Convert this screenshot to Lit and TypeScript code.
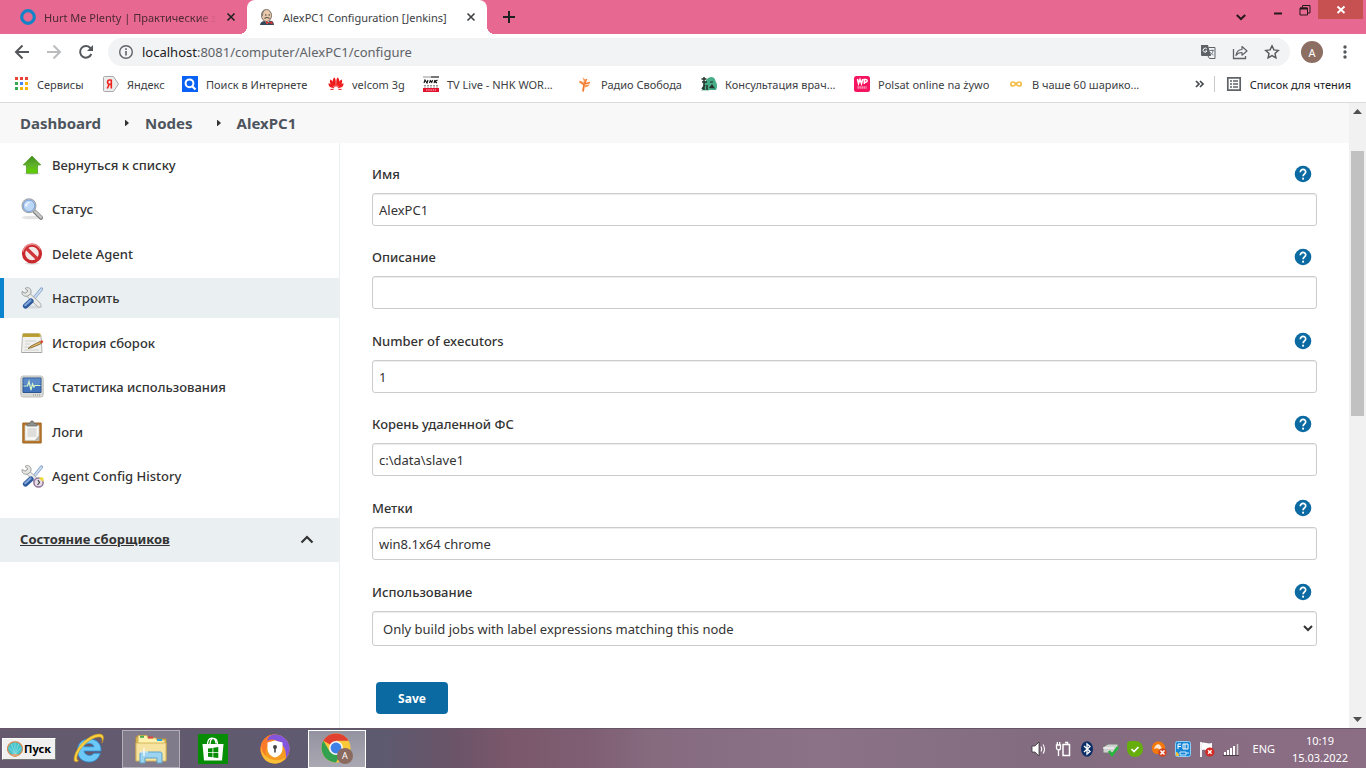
import { LitElement, html, css, svg, type TemplateResult } from "lit";
import { customElement } from "lit/decorators.js";
import { classMap } from "lit/directives/class-map.js";

const icon = (size: number, body: TemplateResult, box = size) =>
  html`<svg width=${size} height=${size} viewBox="0 0 ${box} ${box}" fill="none" aria-hidden="true">${body}</svg>`;

/* ---------- browser icons ---------- */

const ring = icon(16, svg`<circle cx="8" cy="8" r="6.3" stroke="#1583c6" stroke-width="3.2"/>`);

const butler = icon(16, svg`
  <path d="M1 16c.3-2.500 1.500-3.400 4-4l7-.3c2 .5 2.800 2 3 4.300z" fill="#33495c"/>
  <path d="M5.500 11.500 8 15l3-3.500z" fill="#fff"/>
  <ellipse cx="7.500" cy="6.500" rx="5" ry="6" fill="#e8c9ac" stroke="#5b5148" stroke-width=".8"/>
  <path d="M2.600 7C1.800 3 4 .8 7 .6c-2 1.200-2.800 2.500-3 6.400z" fill="#8b8178"/>
  <path d="M5.500 9.500c1.500-1.200 3.500-1.200 5 0" stroke="#5b5148" stroke-width="1.200"/>
  <path d="M6 6h1.500M9.500 6H11" stroke="#3d3530"/>
  <path d="m7 12 3 1.400L13.500 12v3.500L10 14l-3 1z" fill="#d33833"/>`);

const closeX = icon(10, svg`<path d="m1.500 1.500 7 7m0-7-7 7" stroke="currentColor" stroke-width="1.600"/>`);
const plus = icon(12, svg`<path d="M6 0v12M0 6h12" stroke="#202124" stroke-width="2"/>`);
const tabMenu = icon(10, svg`<path d="m.8 3 4.200 4 4.200-4" stroke="#26191e" stroke-width="2"/>`);
const minimise = icon(10, svg`<path d="M1 8.500h8" stroke="#26191e" stroke-width="2"/>`);
const restore = icon(12, svg`<path d="M1 4h7.500v7H1z" stroke="#26191e"/><path d="M1 4.500h7.500" stroke="#26191e" stroke-width="2"/><path d="M3.500 3.500v-2h7.500v7.500h-2" stroke="#26191e"/>`);
const closeWin = icon(10, svg`<path d="m1.500 1.500 7 6.500m0-6.500-7 6.500" stroke="#fff" stroke-width="2"/>`);

const back = icon(16, svg`<path d="M15 8H2m6.500-6.500L2 8l6.500 6.500" stroke="#54575b" stroke-width="2"/>`);
const forward = icon(16, svg`<path d="M1 8h13M7.500 1.500 14 8l-6.500 6.500" stroke="#babcbe" stroke-width="2"/>`);
const reload = icon(16, svg`<path d="M13.300 10a5.800 5.800 0 1 1-1.200-6.200L14 5.500" stroke="#54575b" stroke-width="2"/><path d="M15 1v6H9z" fill="#54575b"/>`);
const info = icon(16, svg`<circle cx="8" cy="8" r="6.300" stroke="#5f6368" stroke-width="1.400"/><path d="M8 7v4.500M8 4.300v1.600" stroke="#5f6368" stroke-width="1.600"/>`);
const translate = icon(16, svg`
  <path d="M1 1h7l3 11H2a1 1 0 0 1-1-1z" fill="#5f6368"/>
  <path d="M8.500 3.500H15v11H9.500L8 12" stroke="#5f6368"/>
  <path d="M6.800 5A2 2 0 1 0 7 7H5.200" stroke="#fff"/>
  <path d="M9.500 6.500H14M12 5.500v1M13 7c-.5 2-1.500 3.500-3 4m0-3c.8 1.500 2 2.500 3.500 3" stroke="#5f6368" stroke-width=".8"/>`);
const share = icon(16, svg`<path d="M1.500 5v9.500h12V12" stroke="#5f6368" stroke-width="1.300"/><path d="M4 11.500c.5-4 2.500-5.800 6-6V2.500L15 7l-5 4.200V8.500c-3-.1-4.500.8-6 3z" stroke="#5f6368" stroke-width="1.200" stroke-linejoin="round"/>`);
const star = icon(16, svg`<path d="m8 1.800 1.900 4.100 4.400.5-3.300 3 .9 4.400L8 11.600l-3.900 2.200.9-4.400-3.300-3 4.400-.5z" stroke="#54575b" stroke-width="1.400"/>`);
const kebab = icon(16, svg`<g fill="#54575b"><circle cx="8" cy="3" r="1.700"/><circle cx="8" cy="8" r="1.700"/><circle cx="8" cy="13" r="1.700"/></g>`);

const apps = icon(16, svg`
  <path d="M2 1h3v3H2zM7 1h3v3H7zM12 1h3v3h-3z" fill="#ea4335"/>
  <path d="M2 6h3v3H2zM2 11h3v3H2z" fill="#34a853"/><path d="M7 6h3v3H7z" fill="#4285f4"/>
  <path d="M12 6h3v3h-3zM7 11h3v3H7zM12 11h3v3h-3z" fill="#fbb40a"/>`);
const yandex = icon(16, svg`<path d="M1.500.5h9l5 7.500-5 7.500h-9a1 1 0 0 1-1-1v-13a1 1 0 0 1 1-1z" fill="#ececec" stroke="#a9a9a9"/><path d="M8.300 3.500v9M8 4H6.400C4 4 4 8.200 6.400 8.200H8M6.300 8.200l-2 4.300" stroke="#f0201b" stroke-width="1.600"/>`);
const search = icon(16, svg`<path d="M0 0h16v16H0z" fill="#0a62f5"/><circle cx="7.500" cy="7.300" r="3.900" stroke="#fff" stroke-width="2"/><path d="m10 10 3.500 3.500" stroke="#fff" stroke-width="2.200"/>`);
const flower = icon(16, svg`<g fill="#ee1c1c">
  <path d="M7.700 11C4.200 8 3.800 4 6.200 1.500c1.500.6 1.800 3.500 1.500 9.500z"/><path d="M8.300 11C11.800 8 12.200 4 9.800 1.500c-1.500.6-1.800 3.500-1.500 9.500z"/>
  <path d="M6.900 11.300C3 9.500 1 7 2.300 3.600 4.600 4.400 6 7 6.900 11.300z"/><path d="M9.100 11.300C13 9.500 15 7 13.700 3.600c-2.300.8-3.700 3.400-4.600 7.700z"/>
  <path d="M6.500 12C2.500 12 .5 10.500.3 7.500c2.600-.4 4.400 1.500 6.200 4.500z"/><path d="M9.500 12c4 0 6-1.500 6.200-4.500-2.600-.4-4.400 1.500-6.200 4.500z"/>
  <path d="M6.500 12.800c-1.800 1.600-3.500 1.700-4.700.2zM9.500 12.800c1.800 1.600 3.500 1.700 4.700.2z"/></g>`);
const nhk = icon(16, svg`
  <path d="M0 0h8v2H0z" fill="#c9c9c9"/><path d="M8 0h8v2H8z" fill="#777"/>
  <path d="M1 7l1-3 2 3 1-3M6.500 7l1-3m2 0-1 3M7 5.500h2M11 7l1-3m2.500 0L12 5.500 14 7" stroke="#111" stroke-width="1.100"/>
  <path d="M1 9.500h14M1 11h14" stroke="#999" stroke-dasharray="2 1"/>
  <path d="M0 12h16v4H0z" fill="#e0122d"/><path d="M3 14h10" stroke="#fbc" stroke-dasharray="1.500 .7"/>`);
const torch = icon(16, svg`<path d="m6 15.500 1.200-7.500M7 8.500 2.500 5.500M7.500 8 13 6.500M7.500 7.500 9.500 3" stroke="#f4792b" stroke-width="1.800"/><path d="M7 6 5.500 1 9 4.500zM1.500 4.500l5 1.500 1.500 3zM8 9l5-.5-2 2-3 1z" fill="#f79a5a"/>`);
const doctor = icon(16, svg`<path d="M6 3c3-3.500 8-2.500 8.500 2 2 3.500 2 6 .5 9H1l2-7z" fill="#47ae87"/><path d="M3 1v13M.5 3h5M1 6h5M4 9l-3 4M6 9v5" stroke="#26352f" stroke-width="1.500"/><path d="m8 12 3-4 3 4.500z" fill="#27302d"/><path d="M9 6h3" stroke="#222"/><path d="M0 14.500h8" stroke="#b9dccf"/>`);
const wp = icon(16, svg`<rect width="16" height="16" rx="2.500" fill="#f5145f"/><path d="m3.500 3 1 4.500 1.500-4 1.500 4 1.300-4.500M10.300 8V3.500h1.400c2 0 2 2.700 0 2.700h-1.400" stroke="#fff" stroke-width="1.500"/><path d="M3.500 11.500h9" stroke="#fba3c2" stroke-width="2.500" stroke-dasharray="1.300 .7"/>`);
const infinity = icon(16, svg`<path d="M8 8C6.500 6 5.500 6 4.800 6a2 2 0 0 0 0 4C5.500 10 6.500 10 8 8s2.500-2 3.200-2a2 2 0 0 1 0 4C10.500 10 9.500 10 8 8z" stroke="#f4bd45" stroke-width="1.700"/>`);
const overflow = icon(10, svg`<path d="m1 2 3 3-3 3m4-6 3 3-3 3" stroke="#46494d" stroke-width="1.700"/>`);
const readList = icon(16, svg`<path d="M1.800 1.800h12.400v12.400H1.800z" stroke="#5f6368" stroke-width="1.700"/><path d="M4 5h2m1 0h5M4 8h2m1 0h5M4 11h2m1 0h5" stroke="#5f6368" stroke-width="1.500"/>`);

/* ---------- sidebar icons ---------- */

const upArrow = icon(24, svg`<ellipse cx="12" cy="20.500" rx="8" ry="1.500" fill="#ddd"/><path d="m12 3 8.800 9h-3.300v8.200H6.500V12H3.200z" fill="url(#g-up)" stroke="#479a18" stroke-width=".7"/>
  <defs><linearGradient id="g-up" x1="0" y1="0" x2="0" y2="1"><stop stop-color="#3e8f1c"/><stop offset=".5" stop-color="#5fae2b"/><stop offset="1" stop-color="#62d400"/></linearGradient></defs>`);
const magnifier = icon(24, svg`<ellipse cx="11" cy="20.500" rx="9" ry="1.700" fill="#e3e3e3"/><path d="m14.500 14.500 6.500 6.200" stroke="#77797a" stroke-width="4.200" stroke-linecap="round"/><path d="m15 14.500 6 5.800" stroke="#c5c6c6" stroke-width="2.500" stroke-linecap="round"/>
  <circle cx="9" cy="8.800" r="6.900" fill="#bdd8f7" stroke="#a3a5a8" stroke-width="1.200"/><circle cx="9" cy="8.800" r="5.700" stroke="#7ba3de"/><path d="M4.800 9c.5-3 3-4.500 6-4-2 .8-3.500 2.500-4 5z" fill="#eaf3ff"/>`);
const forbid = icon(24, svg`<ellipse cx="12" cy="21.500" rx="7" ry="1.200" fill="#ddd"/><circle cx="12" cy="11.500" r="8.400" fill="#f4e9e9" stroke="#c9282c" stroke-width="3.300"/><path d="m6 6 12 11.500" stroke="#d23539" stroke-width="3.300"/><path d="M3 9.500A9.300 9.300 0 0 1 20.500 7.500" stroke="#ea8d8f" stroke-width="1.500"/>`);
const toolShapes = svg`
  <path d="m21.500 3-7.300 9" stroke="#7f9fc9" stroke-width="3.200" stroke-linecap="round"/><path d="m21.300 3.200-7 8.800" stroke="#cfdef0" stroke-width="1.800" stroke-linecap="round"/>
  <path d="M7.500 8 19 19" stroke="#a4a6a7" stroke-width="4.800" stroke-linecap="round"/><path d="M7.500 8 19 19" stroke="#ecedeb" stroke-width="3.400" stroke-linecap="round"/>
  <path d="M5 2.500C8.500 0 12 3 10.800 7.500L8 10c-3.500 1-6.500-.8-6-4.500l3.300 1.700L8 5z" fill="#e6e7e5" stroke="#9a9c9b"/>
  <path d="m11 15-5.500 5" stroke="#2d5a9c" stroke-width="5.200" stroke-linecap="round"/><path d="m10.500 14.500-5.300 4.700" stroke="#7fa6da" stroke-width="2.200" stroke-linecap="round"/>`;
const tools = icon(24, svg`<ellipse cx="13" cy="21" rx="10" ry="1.600" fill="#d5dadd"/>${toolShapes}`);
const toolsHistory = icon(24, svg`${toolShapes}<circle cx="18.500" cy="18.500" r="4.600" fill="#e7dcea" stroke="#8f7596" stroke-width="1.500"/><path d="m18 16 1.500 2.500L17.500 21" stroke="#444" stroke-width="1.200"/><path d="M19 14.500c1-1.500 3-1.500 4.500-.5v4z" fill="#ecd93b"/>`);
const notepad = icon(24, svg`<path d="M2.500 4.500h18.500l1 17h-20.500z" fill="#f1f1ee" stroke="#b3b5b0"/><path d="M2.500 2.500h18v3.500h-18z" fill="#c9ab31"/><path d="M4 2v3.500m2-3.500v3.500m2-3.500v3.500m2-3.500v3.500m2-3.500v3.500m2-3.500v3.500m2-3.500v3.500m2-3.500v3.500" stroke="#93803a" stroke-width=".7"/><path d="M5 10h11M5 13h5M4.500 16h4M4 19h15" stroke="#d0d1cd"/><path d="M2 21.500h20" stroke="#a5a7a2"/><path d="m8 17.500 3-2.500 9-4.500 1.500 2-9.500 4z" fill="#e5bb64" stroke="#75592b" stroke-width=".8"/><path d="m20 10.300 2-1.300 1.500 2-2 1.500z" fill="#dc4b36"/>`);
const monitor = icon(24, svg`<rect x=".8" y="1" width="22.400" height="21" rx="2.500" fill="#d9dad6" stroke="#bcbeb9"/><path d="M3 3h18v14.500H3z" fill="#3f74bd" stroke="#2f5590"/><path d="M3.500 3.500h17V9c-6 2-11 2-17 0z" fill="#5d8bca"/><path d="M3.500 11h4l1.500-4.500L11 15l1.500-6 1.500 3 1-1.500h5.500" stroke="#d8f5c5" stroke-width="1.200"/><path d="M13 20h7" stroke="#8d908a" stroke-dasharray="1 1"/>`);
const clipboard = icon(24, svg`<path d="M2.800 3h18.400v20H2.800z" fill="#b9772c" stroke="#a06722"/><path d="M5 5.500h14V20.500H5z" fill="#f6f6f4" stroke="#c7c7c2" stroke-width=".7"/><path d="M7.500 8h9v9h-9z" fill="#dededb"/><path d="m19 15.500-4.500 5 4.500-.5z" fill="#b6b6b2"/><path d="M7 6V3.500h3L11 1h2l1 2.500h3V6z" fill="#8d8f8c" stroke="#6d6f6c" stroke-width=".8"/>`);
const chevronUp = icon(14, svg`<path d="m1.500 10.500 5.500-5.500 5.500 5.500" stroke="#333" stroke-width="2.200"/>`);
const crumbArrow = icon(6, svg`<path d="M1-.5v7l4-3.500z" fill="#333"/>`);
const help = html`<svg width="18" height="18" viewBox="0 0 18 18" fill="none" aria-hidden="true"><circle cx="9" cy="9" r="8.300" fill="#0b6aa2"/><path d="M6.300 7.200C6.300 3.300 11.900 3.600 11.700 7c-.1 1.800-2.600 2-2.600 4.200" stroke="#fff" stroke-width="1.700"/><path d="M9.100 12.700v1.900" stroke="#fff" stroke-width="1.900"/></svg>`;
const scrollUp = icon(9, svg`<path d="M0 7h9L4.500 2z" fill="#505050"/>`);
const scrollDown = icon(9, svg`<path d="M0 2h9L4.500 7z" fill="#505050"/>`);

/* ---------- taskbar icons ---------- */

const shell = icon(16, svg`<path d="M8 15.500C3 14 0 11 .5 6.500 2 2 5 .8 8 .8s6 1.200 7.500 5.700c.5 4.500-2.500 7.500-7.500 9z" fill="#45c3cc" stroke="#d98a54" stroke-width="1.200"/><path d="M8 14V2M8 14 4.500 3M8 14l3.500-11M8 14 2 6.500M8 14l6-7.500" stroke="#8fe0e2" stroke-width=".8"/><path d="M5 13h6l-1 2.500H6z" fill="#dba87e"/>`);
const explorerE = icon(32, svg`<path d="M28 18H11c.7 5 8 5.800 9.700 2.300h6.600C25.500 26 21.500 29 16 29 9 29 4.500 24 4.500 17.500 4.500 10.500 9.500 6 16 6c8 0 12.500 5 12 12zM11 13.800h10c-.5-4.500-9.200-4.500-10 0z" fill="#6cc8f6" stroke="#2b8fd6" stroke-width=".8"/><path d="M5.500 28C0 31 0 25 3.500 18 8.500 8.500 19 1 26.500 1c4.800.2 4.800 4.500 2.500 9 .9-4.500-.5-6.300-3.500-6C18.500 4.500 8.500 12.500 5 20.500c-1.600 3.700-1.500 6.200.5 7.500z" fill="#fad040" stroke="#c8931e" stroke-width=".6"/>`);
const folder = html`<svg width="34" height="30" viewBox="0 0 34 30" fill="none" aria-hidden="true"><path d="M2 3h9l1.500 2H32v21H2z" fill="#e4c265" stroke="#b99536"/><path d="M4 1.500h9L14 4h8l1 2h8v18H4z" fill="#fff1ae" stroke="#d0ad4d"/><path d="M14 3.500h5" stroke="#d44" stroke-width="2"/><path d="M23 6h5" stroke="#26a6e0" stroke-width="2"/><path d="M6 2.800h4" stroke="#4caa4f" stroke-width="2"/><path d="M2 9h30v18H2z" fill="#f7e3a0" stroke="#d6b65b"/><path d="M6 29V20c0-1 .5-2 2-2h18c1.500 0 2 1 2 2v9h-5v-5H11v5z" fill="#9cd3ef" stroke="#5ba5cd"/><path d="M10 14v8m-4-4h8" stroke="#fff" stroke-width="1.200"/></svg>`;
const store = html`<svg width="30" height="30" viewBox="0 0 30 30" fill="none" aria-hidden="true"><path d="M0 0h30v30H0z" fill="#078c05"/><path d="M4.500 10h21l-1.500 16.500H6z" fill="#fff"/><path d="M9.500 10c.5-7.500 8-8 8.500-.5M12 10c.5-7.500 7-7.500 7.500 0" stroke="#fff" stroke-width="1.300"/><path d="m10 14.500 4.500-.6v4.300H10zM15.300 13.800l5-.7v5.100h-5zM10 19h4.500v4.300l-4.500-.6zM15.300 19h5v5.100l-5-.7z" fill="#078c05"/></svg>`;
const guard = html`<svg width="30" height="30" viewBox="0 0 30 30" fill="none" aria-hidden="true"><circle cx="15" cy="15" r="14.500" fill="#f59b22"/><path d="M13 .5C6 1 .5 7 .5 15c0 5 3 10 7 12.500C4 20 5 10 13 6c4-2 9-1 12 1.500C22 3 18 .5 13 .5z" fill="#fb7b2a"/><path d="M14 .5c8-.5 14 5 15.500 12 .4 4-.5 8-3.500 12 .5-8-2-14-9-17.500C13 5 10 5 7 7c1-4 3.500-6.300 7-6.500z" fill="#8355dd"/><path d="M1 12c1 8 6 13 14 14 4 .5 8-.5 11-2.500-3 4.500-8 6.500-12.500 6C6 29 .5 23 1 12z" fill="#fabf36"/><path d="m15 6.500 7.500 2v5.500c0 5.500-3 8-7.500 9.500-4.500-1.500-7.500-4-7.500-9.500V8.500z" fill="#fff"/><circle cx="15" cy="13" r="2" fill="#444"/><path d="M15 14v4.500" stroke="#444" stroke-width="1.600"/></svg>`;
const chromeLogo = html`<svg width="32" height="32" viewBox="0 0 32 32" fill="none" aria-hidden="true"><circle cx="15" cy="15" r="14.500" fill="#f9c93a"/><path d="M15 15 2.400 7.700A14.500 14.500 0 0 1 27.600 7.700H15z" fill="#e24132"/><path d="M8.700 18.600 2.400 7.700C-2.500 16 2.500 29 15 29.500l6.300-10.900z" fill="#34a150"/><circle cx="15" cy="15" r="7" fill="#f6f6f6"/><circle cx="15" cy="15" r="5.400" fill="#3f7fe8"/></svg>`;

const speaker = icon(16, svg`<path d="M1 5h3l4-4v14l-4-4H1z" fill="#fff" stroke="#333" stroke-width=".8"/><path d="M10 5.500c1 1.500 1 3.500 0 5M12 3.500c2 2.500 2 6.500 0 9" stroke="#fff" stroke-width="1.100"/>`);
const battery = icon(16, svg`<path d="M8 3.500h6.500v11H8zM10 1.500h2.500v2" stroke="#fff" stroke-width="1.500"/><path d="M1.500 4h4v3a2 2 0 0 1-4 0zM2.300 4V1m2.400 3V1M3.500 9v6" stroke="#fff" stroke-width="1.300"/>`);
const bluetooth = icon(16, svg`<ellipse cx="8" cy="8" rx="6" ry="7.700" fill="#0b2e66"/><path d="m5 5 6 5.500L8 13V3l3 2.500L5 11" stroke="#fff" stroke-width="1.300"/>`);
const printer = icon(16, svg`<path d="m0 6 5-3h10v6l-4 3H0z" fill="#cfd1cf" stroke="#777"/><path d="M0 7h11" stroke="#fff"/><path d="m6 10 3 4 6-8" stroke="#25b53b" stroke-width="2.500"/>`);
const agent = icon(16, svg`<path d="M0 4C0 1 1 0 4 0h4c5 0 8 3.500 8 8s-3.500 8-8 8-8-3.500-8-8z" fill="#65ae0b"/><path d="m4.500 8 2.500 2.500 4.500-4.500" stroke="#fff" stroke-width="1.700"/>`);
const avastTray = icon(16, svg`<path d="M1 7C1 2 5 0 8 .5c4 .5 7 4 6 8-1 3.500-4 5-7 4.500-4 0-6-2-6-6z" fill="#f5780b"/><path d="M3 8c1-4 4-6 6-4l3 5c-1 2-3 1-4-1-1-1-3-1-5 0z" fill="#ffe8d2"/><circle cx="11.500" cy="11.500" r="4.200" fill="#d3441e"/><path d="m9.500 9.500 4 4m0-4-4 4" stroke="#fff" stroke-width="1.500"/>`);
const gpu = icon(16, svg`<rect x=".5" y=".5" width="15" height="15" rx="2" fill="#1685d6" stroke="#8bd0fa"/><path d="M3 3v5m0-5h3M3 5.500h3M8 3h5v5H8zM10 3v5" stroke="#fff"/><path d="M5 11h6v3H5zM11 12h3" stroke="#cdeaff"/><path d="M1 11c2 0 3 2 3 4H1z" fill="#f6c33c"/>`);
const flag = icon(16, svg`<path d="M2 1v15" stroke="#fff" stroke-width="1.800"/><path d="M3 2c3-1.500 5 1.500 10 0v7C8 10.500 6 8 3 9z" fill="#fff"/><circle cx="10.800" cy="11" r="4.600" fill="#d32a24"/><path d="m9 9.200 3.600 3.600m0-3.600L9 12.800" stroke="#fff" stroke-width="1.300"/>`);
const signal = icon(16, svg`<path d="M2 11v3M5 9v5M8 7v7M11 5v9" stroke="#fff" stroke-width="2"/><path d="M14.500 3v11" stroke="#ccc" stroke-width="1.500"/><path d="M0 14.500h16" stroke="#4b4048"/>`);

/* ---------- data ---------- */

interface Task { label: string; picture: TemplateResult; selected?: boolean }
interface Field { id: string; label: string; value: string }

const bookmarks: { label: string; picture: TemplateResult }[] = [
  { label: "Сервисы", picture: apps },
  { label: "Яндекс", picture: yandex },
  { label: "Поиск в Интернете", picture: search },
  { label: "velcom 3g", picture: flower },
  { label: "TV Live - NHK WOR...", picture: nhk },
  { label: "Радио Свобода", picture: torch },
  { label: "Консультация врач...", picture: doctor },
  { label: "Polsat online na żywo", picture: wp },
  { label: "В чаше 60 шарико...", picture: infinity },
];

const tasks: Task[] = [
  { label: "Вернуться к списку", picture: upArrow },
  { label: "Статус", picture: magnifier },
  { label: "Delete Agent", picture: forbid },
  { label: "Настроить", picture: tools, selected: true },
  { label: "История сборок", picture: notepad },
  { label: "Статистика использования", picture: monitor },
  { label: "Логи", picture: clipboard },
  { label: "Agent Config History", picture: toolsHistory },
];

const fields: Field[] = [
  { id: "name", label: "Имя", value: "AlexPC1" },
  { id: "description", label: "Описание", value: "" },
  { id: "executors", label: "Number of executors", value: "1" },
  { id: "root", label: "Корень удаленной ФС", value: "c:\\data\\slave1" },
  { id: "labels", label: "Метки", value: "win8.1x64 chrome" },
];

const base = css`
  * { box-sizing: border-box; }
  button, input, select { font: inherit; color: inherit; margin: 0; }
  button { border: 0; background: none; padding: 0; display: flex; align-items: center; justify-content: center; }
  a { color: inherit; text-decoration: none; }
  svg { display: block; flex: none; }
`;

@customElement("browser-chrome")
export class BrowserChrome extends LitElement {
  static styles = [base, css`
    :host { display: block; background: #fff; color: #3c4043; font-size: 11px; border-bottom: 1px solid #d9dbde; }
    .strip { display: flex; height: 34px; background: #e76891; }
    .tab { display: flex; align-items: center; gap: 8px; height: 34px; padding: 0 9px 0 20px; white-space: nowrap; }
    .tab.idle { width: 247px; color: #4d2936; }
    .tab.active { position: relative; width: 240px; padding-left: 12px; background: #fff; border-radius: 8px 8px 0 0; }
    .tab.active::before, .tab.active::after { content: ""; position: absolute; bottom: 0; width: 8px; height: 8px; }
    .tab.active::before { right: 100%; background: radial-gradient(circle at 0 0, transparent 8px, #fff 8px); }
    .tab.active::after { left: 100%; background: radial-gradient(circle at 100% 0, transparent 8px, #fff 8px); }
    .title { flex: 1; overflow: hidden; }
    .idle .title { -webkit-mask-image: linear-gradient(90deg, #000 90%, transparent); mask-image: linear-gradient(90deg, #000 90%, transparent); }
    .close { width: 14px; height: 16px; color: #202124; }
    .active .close { color: #3c4043; }
    .new { width: 44px; }
    .grow { flex: 1; }
    .window { display: flex; align-items: start; padding-right: 3px; }
    .window button { width: 27px; height: 19px; }
    .window .menu { width: 28px; height: 34px; margin-right: 9px; }
    .window .quit { width: 45px; background: #c75050; }
    .toolbar { display: flex; align-items: center; height: 36px; padding: 0 13px 0 14px; }
    .nav { display: flex; gap: 16px; margin-right: 14px; }
    .address { flex: 1; display: flex; align-items: center; gap: 16px; height: 28px; padding: 0 10px; border-radius: 14px; background: #f1f3f4; }
    .where { flex: 1; display: flex; align-items: center; gap: 8px; font-size: 13px; color: #5f6368; white-space: nowrap; }
    .host { color: #202124; }
    .avatar { width: 22px; height: 22px; margin: 0 14px 0 11px; border-radius: 50%; background: #8d6e63; color: #fff; }
    .kebab { width: 16px; }
    .marks { display: flex; align-items: center; height: 32px; padding: 0 15px 4px 13px; }
    .links { display: grid; grid-template-columns: 90px 79px 146px 95px 154px 124px 153px 154px 134px; flex: 1; }
    .mark { display: flex; align-items: center; gap: 8px; white-space: nowrap; }
    .more { width: 28px; }
    .reading { display: flex; align-items: center; gap: 8px; height: 16px; padding-left: 11px; border-left: 1px solid #c8cacd; color: #202124; }
  `];

  render() {
    return html`
      <div class="strip">
        <div class="tab idle">${ring}<span class="title">Hurt Me Plenty | Практические з</span><button class="close" aria-label="Закрыть вкладку">${closeX}</button></div>
        <div class="tab active">${butler}<span class="title">AlexPC1 Configuration [Jenkins]</span><button class="close" aria-label="Закрыть вкладку">${closeX}</button></div>
        <button class="new" aria-label="Новая вкладка">${plus}</button>
        <div class="grow"></div>
        <div class="window">
          <button class="menu" aria-label="Поиск вкладок">${tabMenu}</button>
          <button aria-label="Свернуть">${minimise}</button>
          <button aria-label="Восстановить">${restore}</button>
          <button class="quit" aria-label="Закрыть">${closeWin}</button>
        </div>
      </div>
      <div class="toolbar">
        <div class="nav">
          <button aria-label="Назад">${back}</button><button aria-label="Вперёд">${forward}</button><button aria-label="Обновить">${reload}</button>
        </div>
        <div class="address">
          <div class="where">${info}<span><span class="host">localhost</span>:8081/computer/AlexPC1/configure</span></div>
          <button aria-label="Перевести">${translate}</button><button aria-label="Поделиться">${share}</button><button aria-label="В закладки">${star}</button>
        </div>
        <button class="avatar">A</button>
        <button class="kebab" aria-label="Меню">${kebab}</button>
      </div>
      <div class="marks">
        <nav class="links">${bookmarks.map((b) => html`<a class="mark" href="#">${b.picture}${b.label}</a>`)}</nav>
        <button class="more" aria-label="Другие закладки">${overflow}</button>
        <button class="reading">${readList}Список для чтения</button>
      </div>`;
  }
}

@customElement("side-panel")
export class SidePanel extends LitElement {
  static styles = [base, css`
    :host { display: block; width: 340px; padding-top: 2px; border-right: 1px solid #eaeff2; font-size: 13px; font-weight: 500; color: #333; }
    .task { display: flex; align-items: center; gap: 8px; height: 40px; margin-bottom: 4px; padding-left: 16px; border-left: 4px solid transparent; }
    .task:nth-child(even) { margin-bottom: 5px; }
    .selected { background: #eaeff2; border-color: #0b84d0; }
    .pane { display: flex; align-items: center; justify-content: space-between; height: 44px; margin-top: 22px; padding: 0 25px 2px 20px; background: #eaeff2; font-weight: 700; }
    .pane a { text-decoration: underline; }
  `];

  render() {
    return html`
      <nav>${tasks.map((t) => html`<a href="#" class=${classMap({ task: true, selected: !!t.selected })}>${t.picture}${t.label}</a>`)}</nav>
      <div class="pane"><a href="#">Состояние сборщиков</a><button aria-label="Свернуть">${chevronUp}</button></div>`;
  }
}

@customElement("node-form")
export class NodeForm extends LitElement {
  static styles = [base, css`
    :host { display: block; flex: 1; padding: 21px 32px 0; font-size: 13px; color: #333; }
    .head { display: flex; align-items: center; justify-content: space-between; height: 20px; margin-bottom: 9px; padding-right: 5px; font-weight: 500; }
    .field { margin-bottom: 21px; }
    .field:nth-child(even), .field:nth-child(5) { margin-bottom: 22px; }
    .box { display: block; width: 100%; height: 33px; padding: 0 6px; border: 1px solid #ccc; border-radius: 3px; background: #fff; box-shadow: inset 0 1px 1px rgba(0, 0, 0, .075); outline: 0; }
    select.box { height: 35px; }
    .save { width: 72px; height: 32px; margin: 36px 0 0 4px; border-radius: 4px; background: #0b6aa2; color: #fff; font-size: 12px; font-weight: 700; }
  `];

  private head(id: string, label: string) {
    return html`<div class="head"><label for=${id}>${label}</label><button type="button" aria-label="Справка: ${label}">${help}</button></div>`;
  }

  render() {
    return html`
      <form @submit=${(e: Event) => e.preventDefault()}>
        ${fields.map((f) => html`<div class="field">${this.head(f.id, f.label)}<input class="box" id=${f.id} .value=${f.value}></div>`)}
        <div class="field">${this.head("mode", "Использование")}
          <select class="box" id="mode"><option>Only build jobs with label expressions matching this node</option><option>Use this node as much as possible</option></select>
        </div>
        <button class="save">Save</button>
      </form>`;
  }
}

@customElement("task-bar")
export class TaskBar extends LitElement {
  static styles = [base, css`
    :host { display: flex; align-items: center; height: 40px; border-top: 1px solid #655566; color: #fff; font-size: 11px;
      background: linear-gradient(90deg, #655a6e 0, #5d5a70 28%, #6a5468 33%, #7a576b 37%, #7f5e73 43%, #866b7f 48%, #8b7287 60%, #836c80 76%, #8b6d84 100%); }
    .start { width: 54px; height: 22px; margin: 0 4px 0 2px; gap: 1px; background: #f0f0f0; border: 1px solid; border-color: #fff #777 #777 #fff; color: #000; font-weight: 700; }
    .app { width: 58px; height: 38px; margin-right: 4px; border: 1px solid transparent; }
    .open { background: rgba(255, 255, 255, .2); border-color: rgba(255, 255, 255, .4); }
    .front { position: relative; background: linear-gradient(#9392a0, #aaa8b2); border-color: #fff; }
    .badge { position: absolute; right: 12px; bottom: 3px; width: 16px; border-radius: 8px; background: #8b6b60; font-size: 9px; line-height: 16px; }
    .grow { flex: 1; }
    .tray { display: flex; gap: 8px; margin-right: 14px; }
    .lang { margin-right: 15px; }
    .clock { width: 60px; margin-right: 16px; text-align: center; line-height: 17px; }
  `];

  render() {
    return html`
      <button class="start">${shell}Пуск</button>
      <button class="app" aria-label="Internet Explorer">${explorerE}</button>
      <button class="app open" aria-label="Проводник">${folder}</button>
      <button class="app" aria-label="Магазин">${store}</button>
      <button class="app" aria-label="Secure Browser">${guard}</button>
      <button class="app front" aria-label="Chrome">${chromeLogo}<span class="badge">A</span></button>
      <div class="grow"></div>
      <div class="tray">${[speaker, battery, bluetooth, printer, agent, avastTray, gpu, flag, signal]}</div>
      <span class="lang">ENG</span>
      <div class="clock"><div>10:19</div><div>15.03.2022</div></div>`;
  }
}

@customElement("app-root")
export class AppRoot extends LitElement {
  static styles = [base, css`
    :host { display: flex; flex-direction: column; height: 100vh; overflow: hidden; background: #fff; font-family: "Noto Sans", "Open Sans", sans-serif; }
    .view { flex: 1; min-height: 0; display: flex; }
    .page { flex: 1; min-width: 0; display: flex; flex-direction: column; overflow: hidden; }
    .crumbs { display: flex; align-items: center; gap: 19px; flex: none; height: 40px; padding-left: 20px; background: #f8f8f8; color: #4d545d; font-size: 15px; font-weight: 700; }
    .crumbs svg { margin-left: 4px; margin-right: -4px; }
    .columns { flex: 1; display: flex; }
    .scroll { display: grid; grid-template-rows: 17px 31fr 265fr 295fr 17px; justify-items: center; width: 17px; background: #f1f1f1; }
    .arrow { align-self: center; }
    .thumb { grid-row: 3; width: 13px; background: #c1c1c1; }
    .down { grid-row: 5; align-self: center; }
  `];

  render() {
    return html`
      <browser-chrome></browser-chrome>
      <div class="view">
        <div class="page">
          <nav class="crumbs"><a href="#">Dashboard</a>${crumbArrow}<a href="#">Nodes</a>${crumbArrow}<a href="#">AlexPC1</a></nav>
          <div class="columns"><side-panel></side-panel><node-form></node-form></div>
        </div>
        <div class="scroll"><span class="arrow">${scrollUp}</span><div class="thumb"></div><span class="down">${scrollDown}</span></div>
      </div>
      <task-bar></task-bar>`;
  }
}
